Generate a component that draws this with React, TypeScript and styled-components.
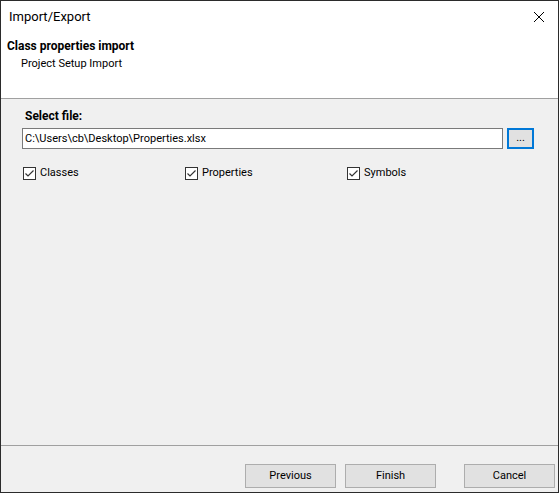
import styled, { createGlobalStyle } from 'styled-components';

const GlobalStyle = createGlobalStyle`
  html, body {
    margin: 0;
    padding: 0;
    background: #f0f0f0;
  }
  body {
    font-family: Roboto, "Noto Sans", "Liberation Sans", sans-serif;
    font-size: 11px;
    color: #000;
  }
`;

const Window = styled.div`
  box-sizing: border-box;
  width: 559px;
  height: 493px;
  border: 1px solid #2b2b2b;
  display: flex;
  flex-direction: column;
  background: #f0f0f0;
`;

const TitleBar = styled.div`
  height: 31px;
  background: #fff;
  display: flex;
  align-items: center;
  justify-content: space-between;
  padding: 0 13px 0 8px;
  font-size: 13px;
  color: #000;
`;

const CloseIcon = styled.svg`
  width: 12px;
  height: 12px;
  display: block;
`;

const Header = styled.div`
  height: 67px;
  background: #fff;
  border-bottom: 1px solid #a0a0a0;
  padding: 6px 0 0 6px;
  box-sizing: border-box;
`;

const HeaderTitle = styled.div`
  font-weight: bold;
  font-size: 12px;
  line-height: 16px;
`;

const HeaderSub = styled.div`
  padding-left: 14px;
  margin-top: 2px;
  line-height: 16px;
`;

const Content = styled.div`
  flex: 1;
  padding: 9px 24px 0 21px;
`;

const Label = styled.div`
  font-weight: bold;
  font-size: 12px;
  padding-left: 3px;
  line-height: 16px;
`;

const FileRow = styled.div`
  display: flex;
  gap: 4px;
  margin-top: 4px;
`;

const FileInput = styled.div`
  flex: 1;
  height: 21px;
  box-sizing: border-box;
  border: 1px solid #7a7a7a;
  background: #fff;
  padding: 0 2px;
  line-height: 19px;
  white-space: nowrap;
`;

const BrowseButton = styled.div`
  width: 27px;
  height: 21px;
  box-sizing: border-box;
  border: 2px solid #0078d7;
  background: #e1e1e1;
  display: flex;
  align-items: center;
  justify-content: center;
  line-height: 1;
  padding-bottom: 3px;
`;

const CheckRow = styled.div`
  display: grid;
  grid-template-columns: 162px 162px auto;
  margin-top: 16px;
  padding-left: 1px;
`;

const CheckItem = styled.label`
  display: flex;
  align-items: center;
  gap: 4px;
  line-height: 16px;
`;

const Box = styled.span`
  width: 13px;
  height: 13px;
  box-sizing: border-box;
  border: 1px solid #333;
  background: #fff;
  display: flex;
  align-items: center;
  justify-content: center;
`;

const Footer = styled.div`
  height: 47px;
  border-top: 1px solid #a0a0a0;
  display: flex;
  align-items: flex-start;
  justify-content: flex-end;
  padding: 18px 3px 0 0;
  box-sizing: border-box;
`;

const Button = styled.div<{ $gap?: number }>`
  width: 91px;
  height: 24px;
  box-sizing: border-box;
  border: 1px solid #adadad;
  background: #e1e1e1;
  display: flex;
  align-items: center;
  justify-content: center;
  margin-left: ${(p) => p.$gap ?? 0}px;
  padding-bottom: 1px;
`;

function Check({ label }: { label: string }) {
  return (
    <CheckItem>
      <Box>
        <svg width="11" height="11" viewBox="0 0 11 11">
          <polyline points="1.5,5.5 4,8 9.5,2.5" fill="none" stroke="#333" strokeWidth="1.2" />
        </svg>
      </Box>
      {label}
    </CheckItem>
  );
}

export default function App() {
  return (
    <>
      <GlobalStyle />
      <Window>
        <TitleBar>
          <span>Import/Export</span>
          <CloseIcon viewBox="0 0 12 12">
            <path d="M1 1 L11 11 M11 1 L1 11" stroke="#000" strokeWidth="1" fill="none" />
          </CloseIcon>
        </TitleBar>
        <Header>
          <HeaderTitle>Class properties import</HeaderTitle>
          <HeaderSub>Project Setup Import</HeaderSub>
        </Header>
        <Content>
          <Label>Select file:</Label>
          <FileRow>
            <FileInput>C:\Users\cb\Desktop\Properties.xlsx</FileInput>
            <BrowseButton>...</BrowseButton>
          </FileRow>
          <CheckRow>
            <Check label="Classes" />
            <Check label="Properties" />
            <Check label="Symbols" />
          </CheckRow>
        </Content>
        <Footer>
          <Button>Previous</Button>
          <Button $gap={9}>Finish</Button>
          <Button $gap={28}>Cancel</Button>
        </Footer>
      </Window>
    </>
  );
}
